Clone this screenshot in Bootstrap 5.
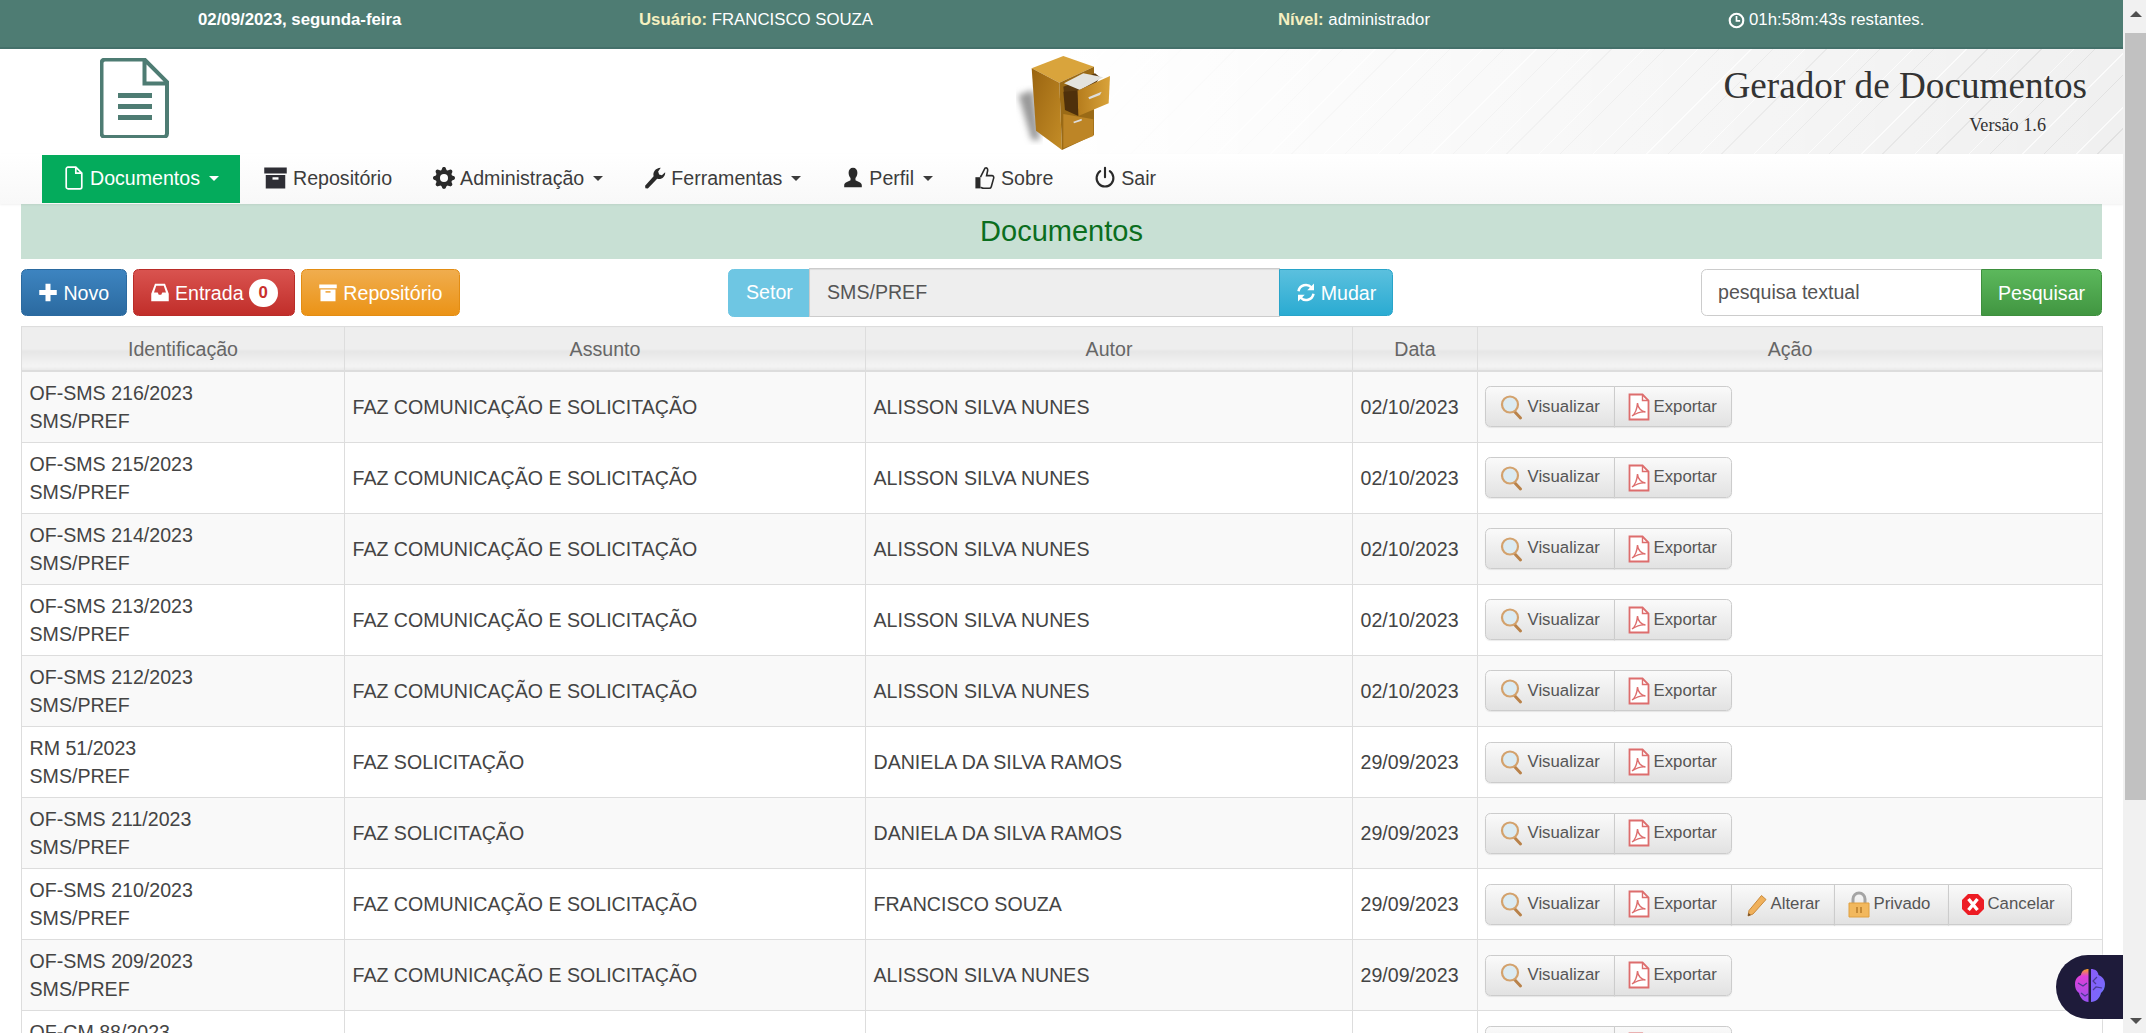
<!DOCTYPE html>
<html lang="pt-BR">
<head>
<meta charset="utf-8">
<title>Gerador de Documentos</title>
<link href="https://cdn.jsdelivr.net/npm/bootstrap@5.3.0/dist/css/bootstrap.min.css" rel="stylesheet">
<style>
html,body{height:100%;overflow:hidden;background:#fff}
body{font-family:"Liberation Sans",Arial,sans-serif;font-size:19.6px;line-height:28px;color:#444}
.app-shell{height:1033px;overflow:hidden}
.app-main{width:2123px;flex:none;position:relative;overflow:hidden}
.app-scroll{flex:1;background:#f1f1f1;position:relative}
.app-scroll-thumb{position:absolute;left:2px;right:0;top:33px;height:767px;background:#c1c1c1}
.app-arrow-up,.app-arrow-down{position:absolute;left:7px;width:0;height:0;border-left:6px solid transparent;border-right:6px solid transparent}
.app-arrow-up{top:11px;border-bottom:6px solid #505050}
.app-arrow-down{bottom:9px;border-top:6px solid #505050}
.top-strip{height:49px;background:#4e7c73;border-bottom:2px solid #44706a;color:#fff;font-size:16.8px;display:grid;grid-template-columns:441px 639px 450px 1fr;padding-left:198px;align-items:center;padding-bottom:7px}
.top-label{color:#f5f0c0;font-weight:700}
.top-date{font-weight:700}
.app-head{height:105px;display:grid;grid-template-columns:1000px 130px 1fr;background:linear-gradient(to right,#fff 50%,rgba(255,255,255,0) 100%),repeating-linear-gradient(135deg,rgba(255,255,255,0) 0 22px,rgba(255,255,255,.7) 22px 23px,rgba(255,255,255,0) 23px 37px,rgba(190,190,190,.3) 37px 38px),linear-gradient(#f0f0f0,#f0f0f0)}
.app-logo{margin:9px 0 0 100px;display:block}
.app-cab{display:block}
.app-title{text-align:right;padding-right:36px;font-family:"Liberation Serif","Times New Roman",serif;color:#333}
.app-title-main{font-size:37.2px;line-height:40px;margin-top:17px}
.app-title-ver{font-size:18.2px;line-height:20px;margin-top:9px;padding-right:41px}
.app-nav{height:50px;background:linear-gradient(to bottom,#fff,#f8f8f8);padding:0 0 0 42px;box-shadow:0 1px 2px rgba(0,0,0,.06)}
.app-nav.navbar-expand .navbar-nav .nav-link{height:48px;display:flex;align-items:center;gap:5px;padding:0 20.5px 2px;color:#3c3c3c;font-size:19.6px}
.app-nav .nav-link.dropdown-toggle::after{margin-left:4px;border-top-width:.29em;border-right-width:.29em;border-left-width:.29em}
.app-nav .nav-link svg{width:22px;height:24px;flex:none}
.app-nav.navbar-expand .navbar-nav .nav-link.app-on{background:#04ab5c;color:#fff;padding:0 20.5px 2px 21px;margin-right:3px}
.app-nav.navbar-expand .navbar-nav .nav-link svg.app-wide{width:25px}
.app-band{margin:0 21px;height:55px;background:#c8e0d4;color:#0b6e1e;font-size:29px;line-height:55px;text-align:center}
.app-tools{margin:10px 21px;height:47px;display:grid;grid-template-columns:707px 665px 1fr;align-items:center}
.app-tools .btn{font-size:19.6px;line-height:28px;padding:8.4px 16.4px;border-radius:5.5px;height:47px;color:#fff;border-width:1px;display:inline-flex;align-items:center;gap:5px;white-space:nowrap}
.app-tools svg{width:20px;height:21px;flex:none}
.app-tool-left{display:flex;gap:6px}
.btn-primary.app-g{background:linear-gradient(#3d84c0,#2b6aa0);border-color:#2b6aa0}
.btn-danger.app-g{background:linear-gradient(#d9534f,#c12e2a);border-color:#b92c28}
.btn-warning.app-g{background:linear-gradient(#f0ad4e,#eb9316);border-color:#e38d13}
.btn-info.app-g{background:linear-gradient(#5bc0de,#2aabd2);border-color:#28a4c9}
.btn-success.app-g{background:linear-gradient(#5cb85c,#419641);border-color:#3e8f3e;justify-content:center}
.app-count{background:#fff;color:#c9302c;border-radius:14px;font-size:16.8px;line-height:20px;height:28px;width:29px;display:inline-flex;align-items:center;justify-content:center;font-weight:700}
.app-setor{width:665px;height:47px}
.app-setor .input-group-text{background:#6ec6e3;border-color:#6ec6e3;color:#fff;font-size:19.6px;padding:0 17px;border-radius:5.5px 0 0 5.5px;width:82px}
.app-setor .form-control{background:#eee;color:#555;font-size:19.6px;padding:0 17px;box-shadow:inset 0 1px 1px rgba(0,0,0,.075);border-color:#ccc;height:49px;margin-top:-1px}
.app-setor .btn{border-radius:0 5.5px 5.5px 0;width:114px;padding:0;justify-content:center}
.app-search{width:401px;margin-left:auto;height:47px}
.app-search .form-control{font-size:19.6px;padding:0 16px;color:#555;border-color:#ccc;border-radius:5.5px 0 0 5.5px;height:47px}
.app-search .form-control::placeholder{color:#555;opacity:1}
.app-search .btn{width:121px;padding:0;border-radius:0 5.5px 5.5px 0}
.app-table-wrap{margin:0 21px}
.app-table{width:2081px;table-layout:fixed;margin:0;--bs-table-border-color:#ddd;--bs-table-striped-bg:#f9f9f9;--bs-table-bg:#fff;--bs-table-color:#444;--bs-table-striped-color:#444;font-size:19.6px;line-height:28px}
.app-table thead{vertical-align:middle}
.app-table th{font-weight:400;text-align:center;height:44.5px;padding:0 7.5px;color:#666;vertical-align:middle;background:linear-gradient(#eee 0,#eee 50%,#e6e6e6 55%,#f4f4f4 90%,#e8e8e8 100%);border-bottom-width:2px}
.app-table td{padding:5.6px 7.5px;height:71.1px}
.app-c1{width:323px}.app-c2{width:521px}.app-c3{width:487px}.app-c4{width:125px}.app-c5{width:625px}
.app-act{margin-left:-1px}
.app-act .btn{font-size:16.8px;line-height:24.6px;height:41px;padding:0 12px;color:#555;border:1px solid #ccc;background:linear-gradient(#fafafa,#e2e2e2);display:inline-flex;align-items:center;gap:3px;white-space:nowrap;border-radius:5.5px;box-shadow:0 1px 1px rgba(0,0,0,.08)}
.app-act .btn svg{width:24px;height:28px;flex:none}
.app-act .btn.app-v{gap:5px;padding:0 13px}
.app-v{width:130px}.app-x{width:118px}.app-a{width:104px}.app-p{width:115px}.app-k{width:124px}
.app-brain{position:absolute;right:0;bottom:14px;width:67px;height:64px;background:#1e1b3a;border-radius:32px 0 0 32px;box-shadow:0 0 3px #fff;display:flex;align-items:center;justify-content:center}
</style>
</head>
<body>
<svg width="0" height="0" style="position:absolute" aria-hidden="true">
<defs>
<symbol id="i-file" viewBox="0 0 16 20"><path d="M1.500 2.500a1.500 1.500 0 0 1 1.500-1.500h6.500l5 5v11.500a1.500 1.500 0 0 1-1.500 1.500h-10a1.500 1.500 0 0 1-1.500-1.500zM9.500 1v5h5" fill="none" stroke="currentColor" stroke-width="1.400"/></symbol>
<symbol id="i-box" viewBox="0 0 16 16"><path fill="#2e2e35" d="M.5 1h15v4H.5zM1.500 6h13v9h-13z"/><path fill="#fff" d="M6 7.500h4v1.600H6z"/></symbol>
<symbol id="i-gear" viewBox="0 0 16 16"><path fill="#2a2a2a" d="M9.405 1.05c-.413-1.4-2.397-1.4-2.81 0l-.1.34a1.464 1.464 0 0 1-2.105.872l-.31-.17c-1.283-.698-2.686.705-1.987 1.987l.169.311c.446.82.023 1.841-.872 2.105l-.34.1c-1.4.413-1.4 2.397 0 2.81l.34.1a1.464 1.464 0 0 1 .872 2.105l-.17.31c-.698 1.283.705 2.686 1.987 1.987l.311-.169a1.464 1.464 0 0 1 2.105.872l.1.34c.413 1.4 2.397 1.4 2.81 0l.1-.34a1.464 1.464 0 0 1 2.105-.872l.31.17c1.283.698 2.686-.705 1.987-1.987l-.169-.311a1.464 1.464 0 0 1 .872-2.105l.34-.1c1.4-.413 1.4-2.397 0-2.81l-.34-.1a1.464 1.464 0 0 1-.872-2.105l.17-.31c.698-1.283-.705-2.686-1.987-1.987l-.311.169a1.464 1.464 0 0 1-2.105-.872l-.1-.34zM8 10.93a2.929 2.929 0 1 1 0-5.86 2.929 2.929 0 0 1 0 5.858z"/></symbol>
<symbol id="i-wrench" viewBox="0 0 16 16"><path fill="#2a2a2a" d="M1 15.500 L.8 13.600 L7 6.800 C6.300 4 8 .8 12.200.6 L10.300 3.200 L11 5.400 L13 6 L15.400 3.800 C15.600 7 12.800 9.500 9.600 8.600 L2.800 15.600 Z"/></symbol>
<symbol id="i-user" viewBox="0 0 16 16"><path fill="#2a2a2a" d="M8 .6c2 0 3.200 1.500 3.200 3.600 0 1.500-.6 3-1.400 3.800v1.600c1.800.9 4.600 1.600 4.600 3.600v1.600H1.600v-1.600c0-2 2.800-2.700 4.600-3.600V8C5.400 7.200 4.800 5.700 4.800 4.200 4.800 2.100 6 .6 8 .6z"/></symbol>
<symbol id="i-thumb" viewBox="0 0 16 18"><path fill="none" stroke="#2a2a2a" stroke-width="1.200" d="M4.600 8.400 8 1.600c1.400-.6 2.200.4 2 1.800l-.8 3.800h4c1 0 1.600 1 1.300 1.900l-1.800 6.400c-.2.7-.8 1.200-1.500 1.200H7c-1 0-1.600-.5-2.400-.7"/><path fill="#2a2a2a" d="M.8 8.400h3.800v8.400H.8z"/></symbol>
<symbol id="i-power" viewBox="0 0 16 18"><path fill="none" stroke="#2a2a2a" stroke-width="1.600" stroke-linecap="round" d="M8 1.400v7M4.400 3.900a6.300 6.300 0 1 0 7.200 0"/></symbol>
<symbol id="i-plus" viewBox="0 0 16 16"><path fill="#fff" d="M6 1h4v5h5v4h-5v5H6v-5H1V6h5z"/></symbol>
<symbol id="i-inbox" viewBox="0 0 16 16"><path fill="#fff" d="M4 1h8l3 8v6H1V9zM5 2.600 3.200 8h3l.8 1.800h2L9.800 8h3L11 2.600z"/></symbol>
<symbol id="i-arch" viewBox="0 0 16 16"><path fill="#fff" d="M1 1.500h14v3H1zM2 5.500h12v9.500H2z"/><path fill="#f0ad4e" d="M6 6.800h4v1.400H6z"/></symbol>
<symbol id="i-sync" viewBox="0 0 16 16"><path fill="none" stroke="#fff" stroke-width="2" d="M2 7a6 6 0 0 1 10.400-3M14 9a6 6 0 0 1-10.400 3"/><path fill="#fff" d="M14.400.8v5.400H9zM1.600 15.200V9.800H7z"/></symbol>
<symbol id="i-clock" viewBox="0 0 16 16"><circle cx="8" cy="8" r="6.400" fill="none" stroke="#fff" stroke-width="2"/><path fill="none" stroke="#fff" stroke-width="1.600" d="M8 3.800v4.600h3.400"/></symbol>
<symbol id="i-view" viewBox="0 0 24 28"><path fill="none" stroke="#b9824a" stroke-width="3" stroke-linecap="round" d="M15 18l6.500 7"/><circle cx="11" cy="11.500" r="8" fill="#dcebf2" stroke="#d3a26d" stroke-width="2.200"/></symbol>
<symbol id="i-pdf" viewBox="0 0 24 28"><path fill="#fff" stroke="#dd6d6d" stroke-width="1.800" d="M2.500 1.500h13l6 6v19h-19z"/><path fill="none" stroke="#dd6d6d" stroke-width="1.400" d="M15.500 1.500v6h6M5 23c3-2 5-7 5.500-13 .3 5 4 8.500 8 9-4-.5-9 1-13.500 4z"/></symbol>
<symbol id="i-pen" viewBox="0 0 24 28"><path fill="#f0b15c" stroke="#c98a3c" d="M17.500 5.500l4.500 4L9 24l-5 2 1-5.500z"/><path fill="#6b4a2a" d="M4 26l.5-3 2.400 2z"/></symbol>
<symbol id="i-lock" viewBox="0 0 24 28"><path fill="none" stroke="#a4a4a4" stroke-width="3" d="M6 14V9a6 6 0 0 1 12 0v5"/><path fill="#f2b85d" stroke="#e0a040" d="M2 13h20v14H2z"/><path fill="#c58a36" d="M9 17h2v6H9zM13 17h2v6h-2z"/></symbol>
<symbol id="i-x" viewBox="0 0 24 28"><path fill="#ed1c24" d="M7 4h10l6 6v9l-6 6H7l-6-6v-9z"/><path stroke="#fff" stroke-width="3.400" d="M7.500 9l9 11M16.500 9l-9 11"/></symbol>
</defs>
</svg>
<div class="app-shell d-flex">
<div class="app-main">
<div class="top-strip">
<div class="top-date">02/09/2023, segunda-feira</div>
<div><span class="top-label">Usuário:</span> FRANCISCO SOUZA</div>
<div><span class="top-label">Nível:</span> administrador</div>
<div class="d-flex align-items-center gap-1"><svg width="17" height="17"><use href="#i-clock"/></svg>01h:58m:43s restantes.</div>
</div>
<header class="app-head">
<div>
<svg class="app-logo" width="70" height="80" viewBox="19 7 70 80"><path d="M24 8.500h39.500L86 31v51.500a3.500 3.500 0 0 1-3.500 3.500h-58.500a3.500 3.500 0 0 1-3.500-3.500V12a3.500 3.500 0 0 1 3.500-3.500zM63.500 8.500V32.500H86" fill="none" stroke="#4e7c73" stroke-width="4"/><path d="M37 44.500h34M37 55.500h34M37 66.500h34" stroke="#4e7c73" stroke-width="5"/></svg>
</div>
<div>
<svg class="app-cab" width="130" height="105" viewBox="0 27 390 315">
<defs><linearGradient id="cab-a" x1="0" x2="1" y2="1"><stop offset="0" stop-color="#9a6410"/><stop offset="1" stop-color="#c48d27"/></linearGradient><linearGradient id="cab-b" x1="0" x2="1"><stop offset="0" stop-color="#b57c1d"/><stop offset="1" stop-color="#d9a33a"/></linearGradient><filter id="cab-s"><feGaussianBlur stdDeviation="9"/></filter></defs>
<path d="M55 165 L100 150 L120 300 L95 300z" fill="#999" filter="url(#cab-s)"/>
<path d="M95 85 L190 48 L282 80 L178 128z" fill="#d9a43c"/>
<path d="M95 85 L178 128 L186 330 L108 272z" fill="url(#cab-a)"/>
<path d="M178 128 L282 80 L282 285 L186 330z" fill="#9a6a16"/>
<path d="M190 140 L285 100 L300 112 L230 220 L198 210z" fill="#5a3a10"/>
<path d="M192 130 L250 100 L310 112 L240 150z" fill="#e3e3de"/>
<path d="M232 152 L330 108 L326 190 L235 228z" fill="url(#cab-b)"/>
<path d="M190 155 L232 152 L235 228 L195 210z" fill="#4f300b"/>
<path d="M265 172 L305 155 L300 165 L268 178z" fill="#ddd"/>
<path d="M190 222 L280 238 L280 288 L190 325z" fill="#bd8526"/>
<path d="M220 245 L245 236 L245 242 L222 250z" fill="#ddd"/>
</svg>
</div>
<div class="app-title">
<div class="app-title-main">Gerador de Documentos</div>
<div class="app-title-ver">Versão 1.6</div>
</div>
</header>
<nav class="navbar navbar-expand app-nav">
<ul class="navbar-nav">
<li class="nav-item"><a class="nav-link dropdown-toggle app-on" href="#"><svg><use href="#i-file"/></svg>Documentos</a></li>
<li class="nav-item"><a class="nav-link" href="#"><svg class="app-wide"><use href="#i-box"/></svg>Repositório</a></li>
<li class="nav-item"><a class="nav-link dropdown-toggle" href="#"><svg><use href="#i-gear"/></svg>Administração</a></li>
<li class="nav-item"><a class="nav-link dropdown-toggle" href="#"><svg><use href="#i-wrench"/></svg>Ferramentas</a></li>
<li class="nav-item"><a class="nav-link dropdown-toggle" href="#"><svg><use href="#i-user"/></svg>Perfil</a></li>
<li class="nav-item"><a class="nav-link" href="#"><svg><use href="#i-thumb"/></svg>Sobre</a></li>
<li class="nav-item"><a class="nav-link" href="#"><svg><use href="#i-power"/></svg>Sair</a></li>
</ul>
</nav>
<div class="app-band">Documentos</div>
<div class="app-tools">
<div class="app-tool-left">
<a class="btn btn-primary app-g" href="#"><svg><use href="#i-plus"/></svg>Novo</a>
<a class="btn btn-danger app-g" href="#"><svg><use href="#i-inbox"/></svg>Entrada<span class="app-count">0</span></a>
<a class="btn btn-warning app-g" href="#"><svg><use href="#i-arch"/></svg>Repositório</a>
</div>
<div class="input-group app-setor">
<span class="input-group-text">Setor</span>
<input class="form-control" type="text" value="SMS/PREF" disabled>
<a class="btn btn-info app-g" href="#"><svg><use href="#i-sync"/></svg>Mudar</a>
</div>
<div class="input-group app-search">
<input class="form-control" type="text" placeholder="pesquisa textual">
<a class="btn btn-success app-g" href="#">Pesquisar</a>
</div>
</div>
<div class="app-table-wrap">
<table class="table table-bordered table-striped align-middle app-table">
<colgroup><col class="app-c1"><col class="app-c2"><col class="app-c3"><col class="app-c4"><col class="app-c5"></colgroup>
<thead><tr><th>Identificação</th><th>Assunto</th><th>Autor</th><th>Data</th><th>Ação</th></tr></thead>
<tbody>
<tr><td>OF-SMS 216/2023<br>SMS/PREF</td><td>FAZ COMUNICAÇÃO E SOLICITAÇÃO</td><td>ALISSON SILVA NUNES</td><td>02/10/2023</td><td><div class="btn-group app-act"><a class="btn app-v" href="#"><svg><use href="#i-view"/></svg>Visualizar</a><a class="btn app-x" href="#"><svg><use href="#i-pdf"/></svg>Exportar</a></div></td></tr>
<tr><td>OF-SMS 215/2023<br>SMS/PREF</td><td>FAZ COMUNICAÇÃO E SOLICITAÇÃO</td><td>ALISSON SILVA NUNES</td><td>02/10/2023</td><td><div class="btn-group app-act"><a class="btn app-v" href="#"><svg><use href="#i-view"/></svg>Visualizar</a><a class="btn app-x" href="#"><svg><use href="#i-pdf"/></svg>Exportar</a></div></td></tr>
<tr><td>OF-SMS 214/2023<br>SMS/PREF</td><td>FAZ COMUNICAÇÃO E SOLICITAÇÃO</td><td>ALISSON SILVA NUNES</td><td>02/10/2023</td><td><div class="btn-group app-act"><a class="btn app-v" href="#"><svg><use href="#i-view"/></svg>Visualizar</a><a class="btn app-x" href="#"><svg><use href="#i-pdf"/></svg>Exportar</a></div></td></tr>
<tr><td>OF-SMS 213/2023<br>SMS/PREF</td><td>FAZ COMUNICAÇÃO E SOLICITAÇÃO</td><td>ALISSON SILVA NUNES</td><td>02/10/2023</td><td><div class="btn-group app-act"><a class="btn app-v" href="#"><svg><use href="#i-view"/></svg>Visualizar</a><a class="btn app-x" href="#"><svg><use href="#i-pdf"/></svg>Exportar</a></div></td></tr>
<tr><td>OF-SMS 212/2023<br>SMS/PREF</td><td>FAZ COMUNICAÇÃO E SOLICITAÇÃO</td><td>ALISSON SILVA NUNES</td><td>02/10/2023</td><td><div class="btn-group app-act"><a class="btn app-v" href="#"><svg><use href="#i-view"/></svg>Visualizar</a><a class="btn app-x" href="#"><svg><use href="#i-pdf"/></svg>Exportar</a></div></td></tr>
<tr><td>RM 51/2023<br>SMS/PREF</td><td>FAZ SOLICITAÇÃO</td><td>DANIELA DA SILVA RAMOS</td><td>29/09/2023</td><td><div class="btn-group app-act"><a class="btn app-v" href="#"><svg><use href="#i-view"/></svg>Visualizar</a><a class="btn app-x" href="#"><svg><use href="#i-pdf"/></svg>Exportar</a></div></td></tr>
<tr><td>OF-SMS 211/2023<br>SMS/PREF</td><td>FAZ SOLICITAÇÃO</td><td>DANIELA DA SILVA RAMOS</td><td>29/09/2023</td><td><div class="btn-group app-act"><a class="btn app-v" href="#"><svg><use href="#i-view"/></svg>Visualizar</a><a class="btn app-x" href="#"><svg><use href="#i-pdf"/></svg>Exportar</a></div></td></tr>
<tr><td>OF-SMS 210/2023<br>SMS/PREF</td><td>FAZ COMUNICAÇÃO E SOLICITAÇÃO</td><td>FRANCISCO SOUZA</td><td>29/09/2023</td><td><div class="btn-group app-act"><a class="btn app-v" href="#"><svg><use href="#i-view"/></svg>Visualizar</a><a class="btn app-x" href="#"><svg><use href="#i-pdf"/></svg>Exportar</a><a class="btn app-a" href="#"><svg><use href="#i-pen"/></svg>Alterar</a><a class="btn app-p" href="#"><svg><use href="#i-lock"/></svg>Privado</a><a class="btn app-k" href="#"><svg><use href="#i-x"/></svg>Cancelar</a></div></td></tr>
<tr><td>OF-SMS 209/2023<br>SMS/PREF</td><td>FAZ COMUNICAÇÃO E SOLICITAÇÃO</td><td>ALISSON SILVA NUNES</td><td>29/09/2023</td><td><div class="btn-group app-act"><a class="btn app-v" href="#"><svg><use href="#i-view"/></svg>Visualizar</a><a class="btn app-x" href="#"><svg><use href="#i-pdf"/></svg>Exportar</a></div></td></tr>
<tr><td>OF-CM 88/2023<br>SMS/PREF</td><td></td><td></td><td></td><td><div class="btn-group app-act"><a class="btn app-v" href="#"><svg><use href="#i-view"/></svg>Visualizar</a><a class="btn app-x" href="#"><svg><use href="#i-pdf"/></svg>Exportar</a></div></td></tr>
</tbody>
</table>
</div>
<div class="app-brain">
<svg width="36" height="38" viewBox="0 0 34 38">
<defs><linearGradient id="br-l" x1="0" y1="0" x2="0" y2="1"><stop offset="0" stop-color="#f8a020"/><stop offset=".22" stop-color="#e040d8"/><stop offset="1" stop-color="#9a50f0"/></linearGradient><linearGradient id="br-r" x1="0" y1="0" x2="1" y2="1"><stop offset="0" stop-color="#8a5cf8"/><stop offset=".7" stop-color="#7a68fa"/><stop offset="1" stop-color="#20d0f0"/></linearGradient></defs>
<path fill="url(#br-l)" d="M15.500 1c-4 0-7 2-7.500 6-4 1.500-6 5-6 9 0 4 1 7 4 9 1 5 5 9 9.500 9z"/>
<path fill="url(#br-r)" d="M18 1c4 0 7 2 7.500 6 4 1.500 6.500 5 6.500 9 0 4-1.500 7-4 9-1 5-5 9-10 9z"/>
<path fill="none" stroke="#4a3a90" stroke-width="1.200" d="M5 15l5 3 4-3M8 25l4 3 3-2M24 9l-4 4 3 3M29 20l-6-1-3 3"/>
</svg>
</div>
</div>
<div class="app-scroll">
<div class="app-arrow-up"></div>
<div class="app-scroll-thumb"></div>
<div class="app-arrow-down"></div>
</div>
</div>
</body>
</html>
